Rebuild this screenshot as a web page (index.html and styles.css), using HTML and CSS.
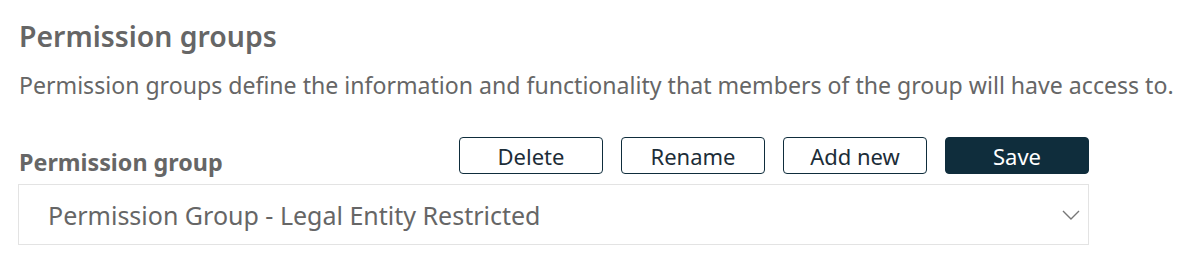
FILE: index.html
```html
<!DOCTYPE html>
<html lang="en">
<head>
<meta charset="utf-8">
<title>Permission groups</title>
<link rel="stylesheet" href="styles.css">
</head>
<body>
<main class="page">
  <h1 class="title">Permission groups</h1>
  <p class="desc">Permission groups define the information and functionality that members of the group will have access to.</p>
  <section class="form">
    <div class="form-head">
      <label class="label" for="pg">Permission group</label>
      <div class="actions">
        <button class="btn">Delete</button>
        <button class="btn">Rename</button>
        <button class="btn">Add new</button>
        <button class="btn btn-primary">Save</button>
      </div>
    </div>
    <div class="select" id="pg">
      <span class="select-value">Permission Group - Legal Entity Restricted</span>
      <svg class="chevron" width="18" height="10" viewBox="0 0 18 10" aria-hidden="true"><path d="M1 1 L9 9 L17 1" fill="none" stroke="#777" stroke-width="1.4"/></svg>
    </div>
  </section>
</main>
</body>
</html>
```
FILE: styles.css
```css
* { box-sizing: border-box; }
html, body { margin: 0; padding: 0; background: #fff; }
body { font-family: "Noto Sans", "Open Sans", "Liberation Sans", sans-serif; color: #666; }
.page { padding: 18px 18px 0 18px; }
.title { margin: 0; font-size: 28.4px; font-weight: 600; line-height: 36px; color: #666; padding-left: 1px; }
.desc { margin: 15px 0 0 0; font-size: 23.1px; line-height: 32px; color: #666; padding-left: 1px; white-space: nowrap; }
.form { width: 1071px; margin-top: 36px; }
.form-head { display: flex; align-items: flex-start; justify-content: space-between; height: 47px; }
.label { font-size: 23.3px; font-weight: 700; color: #666; padding-left: 1px; line-height: 32px; margin-top: 9px; }
.actions { display: flex; gap: 18px; }
.btn { width: 144px; height: 37px; border: 1px solid #0f2d3c; border-radius: 4px; background: #fff; color: #1c2d38; font-family: "Noto Sans", "Open Sans", "Liberation Sans", sans-serif; font-size: 22px; line-height: 1; padding: 0; }
.btn-primary { background: #0f2d3c; color: #fff; }
.select { height: 61px; border: 1px solid #e3e3e3; display: flex; align-items: center; justify-content: space-between; padding: 0 8px 0 29px; }
.select-value { font-size: 25px; color: #666; }
.chevron { display: block; }
```
